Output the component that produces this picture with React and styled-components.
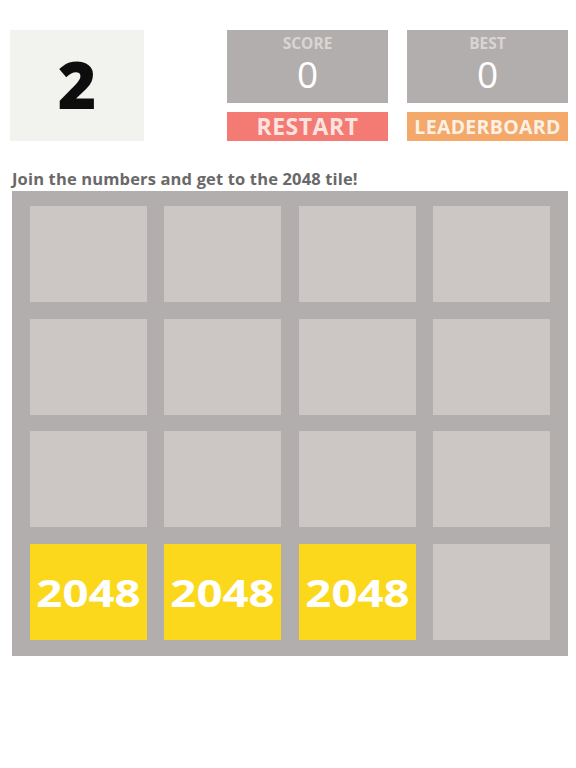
import React from "react";
import styled, { createGlobalStyle } from "styled-components";

const Global = createGlobalStyle`
  html, body { margin: 0; padding: 0; background: #ffffff; }
  body { font-family: "Open Sans", "Liberation Sans", sans-serif; }
`;

const Page = styled.div`
  width: 576px;
  height: 768px;
  background: #fff;
  padding-top: 30px;
  box-sizing: border-box;
`;

const Header = styled.div`
  display: flex;
  padding: 0 8px 0 10px;
`;

const LevelBox = styled.div`
  width: 134px;
  height: 111px;
  background: #f2f2ee;
  display: flex;
  align-items: center;
  justify-content: center;
  font-size: 66px;
  font-weight: 800;
  color: #0d0d0d;
  line-height: 1;
  padding-bottom: 6px;
  box-sizing: border-box;
`;

const Panels = styled.div`
  margin-left: 83px;
  display: grid;
  grid-template-columns: 161px 161px;
  grid-template-rows: 73px 29px;
  column-gap: 19px;
  row-gap: 9px;
`;

const ScoreBox = styled.div`
  background: #b3aeae;
  display: flex;
  flex-direction: column;
  align-items: center;
  padding-top: 5px;
  box-sizing: border-box;
`;

const Label = styled.div`
  font-size: 15.5px;
  font-weight: 700;
  color: #d9d5d4;
  line-height: 16px;
  height: 16px;
`;

const Value = styled.div`
  margin-top: 4px;
  font-size: 37px;
  font-weight: 400;
  color: #ffffff;
  line-height: 37px;
  height: 37px;
`;

const Button = styled.div`
  background: ${(p) => p.$bg};
  color: ${(p) => p.$fg};
  font-size: ${(p) => p.$size}px;
  font-weight: 700;
  display: flex;
  align-items: center;
  justify-content: center;
  line-height: 1;
  letter-spacing: ${(p) => p.$ls || 0}px;
`;

const Hint = styled.div`
  margin: 28px 0 0 12px;
  font-size: 16.5px;
  font-weight: 700;
  letter-spacing: 0.15px;
  color: #6a6868;
  height: 20px;
  line-height: 20px;
`;

const Board = styled.div`
  margin: 2px 0 0 12px;
  width: 556px;
  height: 465px;
  box-sizing: border-box;
  background: #b3aeae;
  padding: 15px 18px 16px 18px;
  display: grid;
  grid-template-columns: repeat(4, 1fr);
  grid-template-rows: repeat(4, 1fr);
  column-gap: 17.3px;
  row-gap: 16.3px;
`;

const Tile = styled.div`
  background: ${(p) => (p.$value ? "#fbd81c" : "#ccc7c5")};
  display: flex;
  align-items: center;
  justify-content: center;
`;

const TileNumber = styled.span`
  display: inline-block;
  color: #ffffff;
  font-size: 38px;
  font-weight: 700;
  line-height: 1;
  transform: scaleX(1.2);
`;

const tiles = [
  0, 0, 0, 0,
  0, 0, 0, 0,
  0, 0, 0, 0,
  2048, 2048, 2048, 0,
];

export default function App() {
  return (
    <Page>
      <Global />
      <Header>
        <LevelBox>2</LevelBox>
        <Panels>
          <ScoreBox>
            <Label>SCORE</Label>
            <Value>0</Value>
          </ScoreBox>
          <ScoreBox>
            <Label>BEST</Label>
            <Value>0</Value>
          </ScoreBox>
          <Button $bg="#f47a74" $fg="#fde3df" $size={23} $ls={0.5}>RESTART</Button>
          <Button $bg="#f4a86a" $fg="#fdf0e4" $size={19.5} $ls={0.3}>LEADERBOARD</Button>
        </Panels>
      </Header>
      <Hint>Join the numbers and get to the 2048 tile!</Hint>
      <Board>
        {tiles.map((v, i) => (
          <Tile key={i} $value={v}>
            {v ? <TileNumber>{v}</TileNumber> : null}
          </Tile>
        ))}
      </Board>
    </Page>
  );
}
